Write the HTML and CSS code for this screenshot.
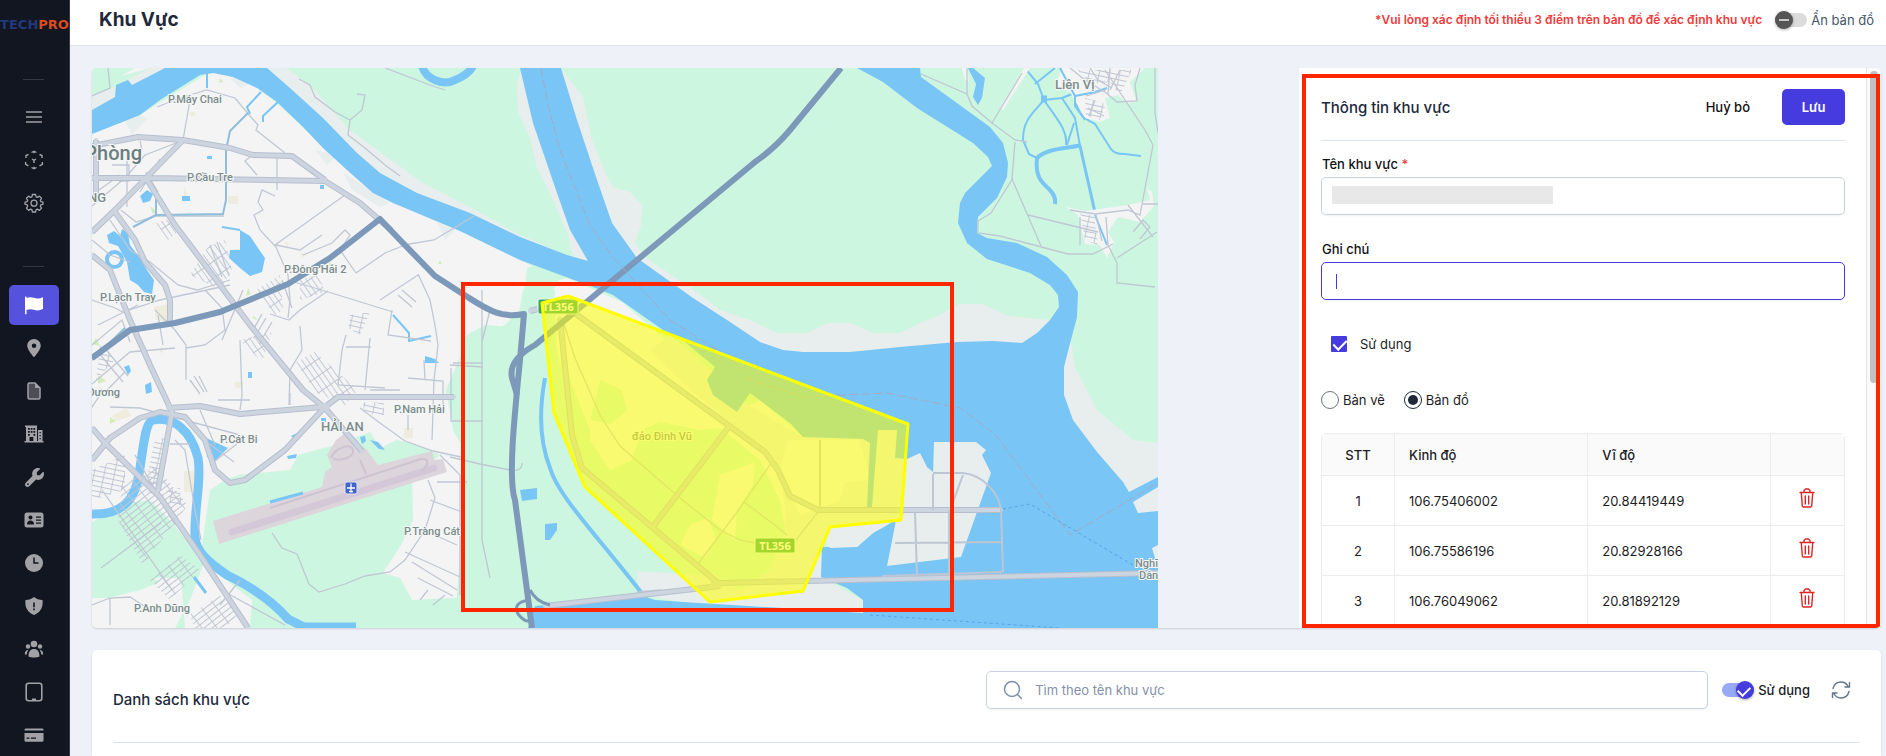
FILE: index.html
```html
<!DOCTYPE html>
<html lang="vi">
<head>
<meta charset="utf-8">
<meta name="viewport" content="width=device-width, initial-scale=1">
<title>Khu Vực</title>
<link rel="stylesheet" href="styles.css">
</head>
<body>
<div class="app">
  <nav class="sidebar" aria-label="Menu chính">
    <a class="logo" href="#"><span class="logo-tech">TECH</span><span class="logo-pro">PRO</span></a>
    <hr class="side-rule">
    <ul class="side-list">
      <li><a class="side-item" href="#" aria-label="Menu"><svg width="18" height="18" viewBox="0 0 18 18" fill="none" stroke="currentColor" stroke-width="1.400"><path d="M1 4h16M1 9h16M1 14h16"/></svg></a></li>
      <li><a class="side-item" href="#" aria-label="Quét"><svg width="20" height="20" viewBox="0 0 20 20" fill="none" stroke="currentColor" stroke-width="1.400"><path d="M7.500 2.500 10 1.200l2.500 1.300M10 1.200v2M7.500 17.500l2.500 1.300 2.500-1.300M10 18.800v-2M2 8V5.500l2.500-1M1.600 12v2.300l2.900 1.600M18 8V5.500l-2.500-1M18.400 12v2.300l-2.900 1.600M8 9l2 1.300L12 9M10 10.300V13"/></svg></a></li>
      <li><a class="side-item" href="#" aria-label="Cài đặt"><svg width="20" height="20" viewBox="0 0 20 20" fill="none" stroke="currentColor" stroke-width="1.300" stroke-linejoin="round"><path d="M8.400 1.500h3.200l.5 2.300 1.300.6 2-1.300 2.100 2.200-1.200 2 .5 1.300 2.200.5v2.100l-2.200.6-.5 1.400 1.200 2-2.100 2.200-2-1.300-1.300.6-.5 2.300H8.400l-.5-2.300-1.300-.6-2 1.300-2.100-2.200 1.200-2-.5-1.400-2.200-.6V9.100l2.200-.5.500-1.300-1.200-2 2.100-2.200 2 1.300 1.300-.6z"/><circle cx="10" cy="10.200" r="3"/></svg></a></li>
    </ul>
    <hr class="side-rule side-rule-second">
    <ul class="side-list">
      <li><a class="side-item active" href="#" aria-label="Khu vực" aria-current="page"><svg width="20" height="20" viewBox="0 0 20 20" fill="currentColor"><path d="M1 2c0-.6 1.500-.6 1.500 0v.9C5 1.800 7.500 2 10 2.800c3 1 5.500.9 9-.6v11.900c-3.500 1.700-6 1.700-9 .7-2.500-.8-5-.9-7.500.2v4.200H1z"/></svg></a></li>
      <li><a class="side-item" href="#" aria-label="Vị trí"><svg width="18" height="18" viewBox="-64 0 512 512" fill="currentColor"><path d="M215.700 499.200C267 435 384 279.400 384 192C384 86 298 0 192 0S0 86 0 192c0 87.400 117 243 168.300 307.200c12.300 15.300 35.100 15.300 47.400 0zM192 128a64 64 0 1 1 0 128 64 64 0 1 1 0-128z"/></svg></a></li>
      <li><a class="side-item" href="#" aria-label="Tài liệu"><svg width="18" height="18" viewBox="0 0 18 18"><path d="M3.500 1H10l5 5v9.500a1.500 1.500 0 0 1-1.500 1.500h-9A1.500 1.500 0 0 1 3 15.500v-13A1.500 1.500 0 0 1 4.500 1z" fill="#4b4e57" stroke="currentColor" stroke-width="1.500"/><path d="M10 1v5h5z" fill="currentColor"/></svg></a></li>
      <li><a class="side-item" href="#" aria-label="Tòa nhà"><svg width="20" height="20" viewBox="0 0 20 20" fill="currentColor" fill-rule="evenodd"><path d="M1 1.500h12V17h1V6h4.500v11h1v1.500H.5V17H2V3H1zM4 4v1.800h1.800V4zm2.700 0v1.800h1.800V4zm2.700 0v1.800h1.800V4zM4 7v1.800h1.800V7zm2.700 0v1.800h1.800V7zm2.700 0v1.800h1.800V7zM4 10v1.800h1.800V10zm5.400 0v1.800h1.800V10zM5.500 13v4h3.800v-4zM15.500 8v1.300h1.300V8zm0 3v1.300h1.300V11zm0 3v1.300h1.300V14z"/></svg></a></li>
      <li><a class="side-item" href="#" aria-label="Bảo trì"><svg width="19" height="19" viewBox="0 0 512 512" fill="currentColor"><path d="M352 320c88.400 0 160-71.600 160-160c0-15.300-2.200-30.100-6.200-44.200c-3.100-10.800-16.400-13.200-24.300-5.300l-76.800 76.800c-3 3-7.100 4.700-11.300 4.700H336c-8.800 0-16-7.200-16-16V118.600c0-4.200 1.700-8.300 4.700-11.300l76.800-76.800c7.900-7.900 5.400-21.200-5.300-24.300C382.100 2.200 367.300 0 352 0C263.600 0 192 71.600 192 160c0 19.100 3.400 37.500 9.500 54.500L19.900 396.100C7.200 408.800 0 426.100 0 444.100C0 481.600 30.400 512 67.900 512c18 0 35.300-7.200 48-19.900L297.500 310.500c17 6.200 35.400 9.500 54.500 9.500zM80 408a24 24 0 1 1 0 48 24 24 0 1 1 0-48z"/></svg></a></li>
      <li><a class="side-item" href="#" aria-label="Thẻ nhân viên"><svg width="20" height="20" viewBox="0 0 20 20"><rect x="0.500" y="2.500" width="19" height="15" rx="2.500" fill="currentColor"/><g fill="#111621"><circle cx="6.500" cy="7.500" r="2"/><path d="M3 14.500c0-3 1.500-4 3.500-4s3.500 1 3.500 4zM12 6.500h5v1.300h-5zM12 9.500h5v1.300h-5zM12 12.500h5v1.300h-5z"/></g></svg></a></li>
      <li><a class="side-item" href="#" aria-label="Thời gian"><svg width="18" height="18" viewBox="0 0 18 18"><circle cx="9" cy="9" r="9" fill="currentColor"/><path d="M9 3.500V9h4.500" fill="none" stroke="#111621" stroke-width="1.500"/></svg></a></li>
      <li><a class="side-item" href="#" aria-label="Cảnh báo"><svg width="18" height="18" viewBox="0 0 18 18"><path d="M9 0c2.500 2 5 2.700 8.500 3 .8 6.500-1.500 12-8.500 15C2 15 -.3 9.500.5 3 4 2.700 6.500 2 9 0z" fill="currentColor"/><path d="M9 5.500v4.700M9 11.500v1.700" stroke="#111621" stroke-width="1.600"/></svg></a></li>
      <li><a class="side-item" href="#" aria-label="Nhóm người dùng"><svg width="20" height="20" viewBox="0 0 20 20" fill="currentColor"><circle cx="10" cy="5" r="3.300"/><circle cx="4" cy="7.500" r="2.200"/><circle cx="16" cy="7.500" r="2.200"/><path d="M4.500 17.500c0-5 2-7.500 5.500-7.500s5.500 2.500 5.500 7.500c-3 1.300-8 1.300-11 0zM.800 15.500c0-2.700 1-4.500 3.600-4.700-1 1.500-1.500 3-1.600 4.700zM19.200 15.500c0-2.700-1-4.500-3.600-4.700 1 1.500 1.500 3 1.600 4.700z"/></svg></a></li>
      <li><a class="side-item" href="#" aria-label="Thiết bị"><svg width="18" height="20" viewBox="0 0 18 20"><rect x="1.200" y="1.200" width="15.600" height="17.600" rx="2.500" fill="none" stroke="currentColor" stroke-width="1.600"/><path d="M7 16.500h4v2H7z" fill="currentColor"/></svg></a></li>
      <li><a class="side-item" href="#" aria-label="Thanh toán"><svg width="20" height="20" viewBox="0 0 20 20"><path d="M1.500 3.500h17a1.200 1.200 0 0 1 1 1.200v.8H.5v-.8a1.200 1.200 0 0 1 1-1.200zM.5 8h19v7.500a1.200 1.200 0 0 1-1.200 1.200H1.700A1.200 1.200 0 0 1 .5 15.500z" fill="currentColor"/><path d="M2.500 13.200h3M7 13.200h5" stroke="#111621" stroke-width="1.200"/></svg></a></li>
    </ul>
  </nav>

  <div class="page">
    <header class="topbar">
      <h1>Khu Vực</h1>
      <p class="hint">*Vui lòng xác định tối thiểu 3 điểm trên bản đồ để xác định khu vực</p>
      <label class="switch-label muted"><input type="checkbox" role="switch" class="switch switch-off">Ẩn bản đồ</label>
    </header>

    <main class="content">
      <section class="map-card">
        <svg class="map" viewBox="92 68 1066 560" preserveAspectRatio="xMinYMin slice" role="img" aria-label="Bản đồ khu vực đảo Đình Vũ">
          <defs>
            <pattern id="blocks" width="12" height="5" patternUnits="userSpaceOnUse" patternTransform="rotate(-38)"><path d="M0 0H12M0 0V5" fill="none" stroke="#bfc6d3" stroke-width="1.900"/></pattern>
            <pattern id="blocks-steep" width="5" height="14" patternUnits="userSpaceOnUse" patternTransform="rotate(-35)"><path d="M0 0V14M0 0H5" fill="none" stroke="#bfc6d3" stroke-width="1.800"/></pattern>
            <pattern id="blocks-flat" width="10" height="5" patternUnits="userSpaceOnUse" patternTransform="rotate(12)"><path d="M0 0H10M0 0V5" fill="none" stroke="#bfc6d3" stroke-width="1.800"/></pattern>
          </defs>
          <rect class="green" x="92" y="68" width="1066" height="560"/>

          <!-- shore strips -->
          <path class="sand" d="M92 95 108 90 150 68H165L92 112ZM267 68H286L310 85 350 130 423 183 470 207 520 235 590 265 470 225 350 170ZM521 70 517 83 518 112 530 138 537 168 550 193 568 235 573 257 590 262 580 190 540 110ZM561 68 583 97 592 140 607 177 613 187 630 192 642 205 641 225 635 243 647 259 690 287 720 310 750 320 778 333H807L827 323H851L873 333H900L920 323 940 315 958 304H983L1008 316 1050 320 1030 360H760L690 320 600 240ZM1071 340 1075 367 1097 410 1133 440 1158 443V628H1050L1060 380Z"/>

          <!-- built-up land -->
          <path class="land" d="M92 132 140 115 213 70 260 88 350 170 400 205 480 240 560 280 567 278 622 302 660 335 700 360 707 380 737 412 760 400 803 437 870 440 868 505 750 530 740 580 690 560 660 520 600 470 560 410 550 340 530 300 525 285 519 312 510 327 485 325 467 335 462 350 461 440 467 480 480 495 482 560 500 580 490 628H92Z"/>
          <path class="sand" d="M230 78 240 88 254 82zM315 150 327 165 338 155zM343 172 352 190 380 207 390 203zM437 222 445 240 455 230zM120 110 148 118 132 135zM670 335 700 360 740 400 803 437 880 425 900 430 908 458 920 453 934 472V442H976L986 450 982 455 991 473 961 557 887 566 896 520 840 525 822 547 821 577 863 600V613L700 605 640 595 636 571 700 575 760 565 786 520 780 470 740 430 690 390 650 350Z"/>
          <path class="sand" d="M1129 492 1158 477V487L1133 502 1138 513 1158 511V545L1152 548 1158 562V628H1130Z"/>

          <!-- fields and parks -->
          <path class="green" d="M92 68H147L92 95ZM527 268 543 262 560 278 552 292 524 306ZM464 338 505 325 520 310 523 290 555 290 556 345 570 415 590 480 700 572 638 571 560 610H500L468 590 462 500Z"/>
          <path class="green" d="M210 490 225 480 238 475 290 470 298 455 335 445 370 432 380 448 397 440 420 446 440 455 412 480 413 520 401 545 383 573 400 578 412 600 470 597 468 628H250L252 600 200 560ZM92 522 128 503 150 500 170 520 190 545 205 560 190 600 175 628H185L182 590 180 578 140 578 92 590Z"/>
          <path class="green" d="M92 545 110 560 140 570 160 582 140 590 108 598 92 598ZM463 350 446 390 453 430 461 445 464 480 455 628H510V480H480V350Z"/>
          <path class="green" d="M600 380 622 390 627 410 610 425 590 420ZM560 330 570 380 590 430 610 470 632 460 642 430 660 422 700 430 720 428 760 460 780 500 785 530 770 570 740 590 700 565 600 500 580 470 562 400Z"/>
          <path class="land" d="M590 420 615 425 632 460 610 470 590 440ZM720 475 755 462 753 485 737 510 735 540 712 520ZM690 525 708 518 716 540 705 558 680 545ZM788 440 860 440 870 480 845 482 840 500 800 515 780 470Z"/>
          <path class="green" d="M500 610 560 606 556 628H500Z"/>
          <path class="lime" d="M150 206 157 212 153 214zM96 338 100 346 92 344zM98 375 106 381 98 384zM220 78 223 82 219 83zM248 288 246 296 251 294zM110 417 116 421 110 424zM186 473 190 477 186 477zM330 262 327 266 332 266zM254 316 258 320 252 318zM440 260 442 264 438 264z"/>
          <path class="field" d="M154 307 168 304 167 322 156 320zM184 187 188 196 184 200zM228 196H238V204H228zM184 471H197L194 492H184zM235 382h8v6h-8zM404 428h9v10h-9zM112 416 126 408 132 416 116 421zM190 112h5v4h-5zM158 349l5-2v7zM284 241l5 2-2 5zM300 252l6 3-4 3z"/>

          <!-- airport -->
          <path class="airport" d="M213 521 322 487 325 472 332 467 327 455 336 440 345 433 367 450 378 465 432 451 434 460 443 459 447 472 219 544Z"/>
          <path class="runway" d="M232 532 434 468"/>
          <path class="taxiway" d="M270 508 421 459q8-1 6 6l-5 6M331 458c4-10 20-16 22-8s-16 12-20 8M360 460l6 14"/>

          <!-- rivers and sea -->
          <path class="water" d="M92 110 115 97 116 85 128 80 132 85 165 68H267L290 88 323 118 357 153 380 173 417 193 470 213 520 237 567 255 588 261 570 230 557 193 533 123 520 68H561L577 120 597 180 612 223 637 258 693 298 727 320 760 342 783 350 803 352H850L900 347 957 342 993 341 1022 343 1037 333 1050 320 1059 307 1058 295 1050 285 1030 273 987 259 967 243 958 223 960 203 965 193 992 166 988 157 973 143 917 108 883 82 857 68H920L921 77 990 127 1003 143 1008 163 1007 177 997 198 978 217 977 233 987 238 1017 243 1047 257 1067 275 1078 292 1077 317 1067 355 1064 367V395L1073 420 1097 452 1123 482 1129 492 1158 477V487L1133 502 1138 513 1158 511V545L1152 548 1155 558 1158 560V628H528L535 606 640 595 655 600 683 602 863 613V600L847 588 821 577 822 547 857 547 873 533 896 520 887 566 961 557 991 473 982 455 986 450 976 442H934L933 472 927 467 920 453 907 459 895 458 897 430H878L872 507H867L870 443 863 439 803 437 790 423 750 393 737 412 713 395 707 380 715 367 680 338 663 330 613 295 593 287 547 270 520 260 460 231 393 203 373 193 347 170 323 148 303 127 277 102 257 88 233 77 213 73 200 75 160 100 140 115 120 123 92 134Z"/>
          <path class="sand" d="M655 592 690 590 712 598 715 603 683 600zM870 517 896 515 892 522 873 533 857 547 830 548 824 540 835 525z"/>
          <path class="land" d="M121 76 150 68H135z"/>
          <g class="stream" fill="none">
            <path stroke-width="9" d="M92 514c28 1 43-12 47-40 5-30 6-52 14-54 20-4 38 10 45 38 4 22-4 50-3 78 0 16 16 28 32 39 25 12 44 25 61 44l16 8h52"/>
            <path stroke-width="4" d="M545 378c-6 32-6 62 5 90 8 28 46 66 97 132"/>
            <path stroke-width="8" d="M422 66c4 14 22 20 33 14 10-4 16-10 18-14"/>
            <path stroke-width="2" d="M207 73v15M261 92l-14 15 3 7M278 102l-15 14v6"/>
            <path stroke-width="2" d="M1025 68 1038 84 1044 100 1062 98 1072 94 1090 90 1105 91M1055 68 1035 84M1044 100c-12 14-21 20-21 40l6 14 8 4M1062 98 1075 118 1080 146M1044 100c12 18 24 30 22 45M1074 123l-7 22M1075 96c2 20 12 24 20 28l14 22c4 8 10 8 16 8l16 2"/>
            <path stroke-width="3" d="M1080 146 1099 230"/>
            <path stroke-width="4" d="M1037 158c10-10 30-9 44-13M1037 158c-2 18 4 24 12 31 6 6 7 10 6 15"/>
            <path stroke-width="7" d="M1041 99h6"/>
            <path stroke-width="3" d="M1096 216l11 28M270 502l33-9M194 577l12 16"/>
            <path stroke-width="2" d="M222 227l18 3M393 315l16 18v8l22-5"/>
          </g>
          <path class="water" d="M140 196 147 190 153 194 150 201 143 203zM122 229 128 233 130 245 140 258 147 270 154 280 152 294 144 292 138 285 130 280 127 262 118 246 109 243 107 235 114 231 120 236zM240 230 250 236 258 248 265 258 262 272 250 276 240 268 229 258 230 250 240 250zM182 196h8v5h-8zM207 156h5v3h-5zM320 185h4v4h-4zM124 367l5-2 2 6-3 4zM145 385l6-3 1 10-6 2zM248 372h4v6h-4zM206 438l22 10-14 14-7-5zM425 356l10 3 4 4h-14zM287 456l10-2-1 4-8 1zM360 437l5-1 1 5-4 3zM370 440l8 2 7 8-6-1zM321 418h5v4h-5zM291 436l8-4-4 8zM520 490l17-2v11l-15 2zM545 524l12-1v7l-7 10h-5zM968 68l5 0 12 10-3 20-4 7-5-8 3-13z"/>
          <circle cx="114.500" cy="259.500" r="7.500" fill="#f4f4f4" stroke="#78c5f6" stroke-width="4"/>
          <path class="land" d="M1062 68H1145L1130 82 1136 100 1128 104 1118 95 1105 98 1110 118 1100 122 1085 118 1070 92 1056 85zM1066 207 1085 211 1128 205 1150 200 1147 188 1152 192 1154 206 1140 222 1118 217 1108 232 1114 242 1107 258 1100 245 1085 244 1078 215zM962 68h5l2 14-4-2zM1024 68h6l-27 42-3-2z"/>
          <path class="thin-water" d="M1060 68l15 28 20-4 12-4M1095 215l12 30M1075 96v10l10 14"/>

          <!-- street blocks -->
          <path fill="url(#blocks)" d="M122 486 155 465 188 505 143 565 118 520zM150 580 180 555 200 570 170 600zM190 615 220 595 238 615 225 628H195z"/>
          <path fill="url(#blocks-steep)" d="M208 247 225 240 232 270 220 290 190 275zM240 340 272 332 262 362zM296 362 315 352 358 390 345 405 315 392zM256 290 280 275 283 310 275 315zM300 280 318 275 325 292 300 300zM156 223 172 218 182 228 168 240z"/>
          <path fill="url(#blocks-flat)" d="M155 440 165 438 155 495 144 490zM92 470 125 455 125 490 92 500zM350 315 370 312 360 335 348 328zM1080 212 1094 216 1098 245 1085 240zM100 345 115 360 96 380zM168 490 180 488 182 505 170 505zM1085 98 1106 104 1100 120 1086 116zM1078 70 1132 70 1120 95 1110 82 1090 84zM363 402 384 403 384 415 364 414z"/>

          <!-- minor streets -->
          <g class="street">
            <path d="M157 107 180 98 207 90 235 98 250 116 258 125 256 130 285 153M190 100 183 140M140 141 142 150M92 206 125 178 145 155 184 140 M160 159l-20 33M277 155v35M250 157l-5 4 12 14M92 195 120 175M127 155v52M112 165h17v16h-10M146 172l12 20"/>
            <path d="M121 210l15 12 20-6H224M110 220 130 250 150 262 178 285 197 290 230 280M345 195 275 245M275 196 262 190 258 202 263 210 254 215 260 230 276 247 288 275 290 300 288 318M322 235 300 250 276 245M303 255 332 243 345 230 350 235 340 250 356 273M356 273 385 253 405 245 M404 245l30-5 40-24M294 282 325 291 393 312M328 291 300 310 289 320 270 314M418 274 430 300 435 325 438 345 434 380 432 440M392 310 388 335 431 341 M418 275 380 300"/>
            <path d="M92 300 115 308 123 312 160 300 230 285M98 325 138 305M92 240 110 255 130 262M155 310 175 330 186 345 186 380M205 290 222 308 225 330 205 345 186 348M243 290 222 340M240 340 242 395 240 410M346 335 342 350 338 385 385 388 M370 338 365 390M300 326 302 350 290 370 289 405M346 347h25"/>
            <path d="M92 384 130 352 175 348M110 407 140 408 240 435M90 410 100 395M125 372l-20 20M218 400H250M360 408l20 15 25 18 28 10 28 6M408 378l35 3v28M424 360 425 380 M370 390h30M408 415v15M428 480l7 18-10 32-20 30-15 12-25 4-20 8-26 8-10-8-12-30-15-6-10-15M405 552l55 25M412 562l45 28M430 500l32 12M423 530l34 15M437 482h30M440 455l20 20v120M418 578l35 18M428 590l-8 10M445 595l-12 10M135 455l40 70M102 490l70 100M101 568l60-45M110 625V598L130 597 150 610M92 605l18-7M225 592 285 625M240 580l-20 25M290 393V405M175 440l10 10 10 60 6 30M170 444l20 0M200 410 215 445M210 465l28-22M204 440l30 22"/>
            <path d="M482 290v50 200l8 38M453 363h30M451 368v53h32M450 365l33 2M450 457l30 7 30 6q12 2 12-7M490 310l-8 32"/>
            <path d="M921 74 967 94 972 106 992 123 1015 140 1027 142M967 68V94M992 123l30-50M1015 142l-3 37 16 37 13 30M1013 178l-22 35-13 8v12l22 3 30 8 38 10h25l20-10M1028 215l70 17M1105 70 1145 130 1153 145 1140 215 1128 210 1095 214 1070 210M1155 68v45l3 20M1107 243l10 20v20l38 4M1117 258l40-26M1128 205l25 32M1143 204h15M1133 232l10-12 7 7-10 12M1096 215l6 26M1106 217l2 28M1080 217v28"/>
            <path d="M1070 68l15 12 20 12 12 10 20-1-2-16 5-17M1090 68l8 12 14 8M1088 108l16 8M1086 96l20-6M1095 100l-6 16M1110 68l-2 26M1120 70l-10 20"/>
            <path d="M92 345 122 320 130 342M158 315l5 30M98 352l25 30M103 346l25 30M210 245l12 32M217 242l12 34M262 314l-10 18M266 318l-12 20M272 322l-13 22M282 280l10 28M398 295l14 12M402 290l14 12M190 380l10 14M194 376l10 16M199 376l8 16"/>
            <path d="M299 79 310 85 315 97 335 112 350 120 362 110 365 95 357 94M350 120 348 135 365 148 385 165 400 176M385 68 430 85 445 90M108 68 110 88 92 96"/>
            <path d="M562 318 575 358 600 415 620 446 680 498 720 530 740 540 755 543M772 462 735 515 697 565M744 502 775 525 787 535M796 540 818 512M661 590 637 592"/>
          </g>
          <path class="canal" d="M248 113 230 131 226 150V200L223 214 156 215V196M156 215 133 227M92 360 125 328"/>

          <!-- main streets -->
          <g class="road-edge"><use href="#roads"/></g>
          <g class="road-fill"><g id="roads">
            <path d="M92 146 138 137 183 140 230 148 253 155 292 156 325 180"/>
            <path d="M96 200V140M92 178 150 178 325 181 360 203 391 230M92 232 115 210 183 140M146 178 175 225 250 325 303 390 325 408 362 451M115 212 135 240 145 262 165 285 170 300V322M92 255 110 270 130 320 150 365 172 412 158 490M92 460 110 438 140 418 160 412 185 417 205 440 215 470 230 483 245 480 285 450 325 407 338 397H454M105 443 160 497 200 555 248 628M168 408 200 406 240 414 322 407M92 428 105 443"/>
            <path d="M538 309 530 311M560 318 572 435 582 468 718 583 712 585M576 314 765 452 778 470 790 496 818 510H1001M728 428 652 528M718 583 1158 573M545 606 720 586"/>
          </g></g>
          <g class="road-mid">
            <path d="M820 440v68M933 474v36M933 473h30c20 2 36 20 38 37l2 62M963 475l-10 27M949 510v66M915 512l2 63M895 543l107-1M882 576l120-4"/>
          </g>

          <!-- highways -->
          <g class="highway">
            <path d="M92 358 130 330 175 323 220 312 288 284 330 258 380 219 400 240 435 276 466 296C485 308 500 319 524 314L520 360C514 420 508 480 515 500L532 628"/>
            <path d="M841 68 790 130Q775 148 755 162L535 345Q508 360 512 378L517 395"/>
            <path class="ramp" d="M530 590q6 12 20 15M530 600q-18 2-12 14 8 10 14 6"/>
          </g>
          <circle cx="325" cy="407" r="4" fill="#ccd4e0"/>
          <path class="border-line" d="M541 68 548 105 560 150 590 225 612 256 670 320 730 358 750 380 805 397 887 393 960 408 995 434 1070 535 1158 483"/>
          <path class="ferry" d="M1003 509 1030 504 1158 580M870 615 1060 628"/>

          <!-- place names -->
          <g class="place">
            <text x="168" y="103">P.Máy Chai</text>
            <text x="187" y="181">P.Cầu Tre</text>
            <text x="284" y="273">P.Đông Hải 2</text>
            <text x="100" y="301">P.Lạch Tray</text>
            <text x="120" y="396" text-anchor="end">P.Dương</text>
            <text x="220" y="443">P.Cát Bi</text>
            <text x="394" y="413">P.Nam Hải</text>
            <text x="404" y="535">P.Tràng Cát</text>
            <text x="134" y="612">P.Anh Dũng</text>
            <text x="1135" y="567">Nghĩa</text>
            <text x="1139" y="579">Dân</text>
            <text x="632" y="440">đảo Đình Vũ</text>
          </g>
          <g class="place place-mid">
            <text x="106" y="202" text-anchor="end">NG</text>
            <text x="321" y="431">HẢI AN</text>
            <text x="1055" y="89">Liên Vị</text>
          </g>
          <text class="place place-city" x="142" y="160" text-anchor="end">Phòng</text>
          <rect x="345" y="482" width="12" height="12" rx="2" fill="#4263c9" stroke="#dfe5f8"/>
          <path d="M351 483.500v9M347 488h8M349 491.500h4" stroke="#fff" stroke-width="1.300"/>

          <g class="shield">
            <rect x="538" y="299" width="40" height="15" rx="2"/><text x="558" y="311">TL356</text>
            <rect x="755" y="538" width="40" height="15" rx="2"/><text x="775" y="550">TL356</text>
          </g>

          <path class="zone" d="M542 303 568 296 908 424 901 520 830 527 803 591 710 602 585 487 554 413Z"/>
          <rect class="marker" x="463" y="284" width="489" height="326"/>
        </svg>

        <aside class="panel">
          <form class="form">
            <div class="form-head">
              <h2>Thông tin khu vực</h2>
              <button type="button" class="btn btn-plain">Huỷ bỏ</button>
              <button type="submit" class="btn btn-primary">Lưu</button>
            </div>
            <label class="field-label" for="zone-name">Tên khu vực <span class="required">*</span></label>
            <div class="field-box">
              <input id="zone-name" class="input" type="text">
              <span class="redacted"></span>
            </div>
            <label class="field-label" for="zone-note">Ghi chú</label>
            <div class="field-box">
              <input id="zone-note" class="input input-focus" type="text">
              <span class="caret"></span>
            </div>
            <label class="check-label"><input type="checkbox" class="check" checked>Sử dụng</label>
            <div class="radios">
              <label class="radio-label"><input type="radio" name="source" class="radio">Bản vẽ</label>
              <label class="radio-label"><input type="radio" name="source" class="radio" checked>Bản đồ</label>
            </div>
            <table class="points">
              <thead>
                <tr><th class="col-index">STT</th><th class="col-lng">Kinh độ</th><th class="col-lat">Vĩ độ</th><th class="col-action"></th></tr>
              </thead>
              <tbody>
                <tr><td>1</td><td>106.75406002</td><td>20.84419449</td><td><button type="button" class="trash" aria-label="Xoá điểm 1"><svg width="16" height="20" viewBox="0 0 16 20"><use href="#trash"/></svg></button></td></tr>
                <tr><td>2</td><td>106.75586196</td><td>20.82928166</td><td><button type="button" class="trash" aria-label="Xoá điểm 2"><svg width="16" height="20" viewBox="0 0 16 20"><use href="#trash"/></svg></button></td></tr>
                <tr><td>3</td><td>106.76049062</td><td>20.81892129</td><td><button type="button" class="trash" aria-label="Xoá điểm 3"><svg width="16" height="20" viewBox="0 0 16 20"><use href="#trash"/></svg></button></td></tr>
              </tbody>
            </table>
          </form>
          <div class="scroll-track"><div class="scroll-thumb"></div></div>
          <div class="panel-marker"></div>
        </aside>
      </section>

      <section class="list-card">
        <div class="list-head">
          <h2>Danh sách khu vực</h2>
          <div class="search">
            <svg width="20" height="20" viewBox="0 0 20 20" fill="none" stroke="#7f8fa8" stroke-width="1.500" stroke-linecap="round"><circle cx="9" cy="9" r="7.500"/><path d="m14.500 14.500 4 4"/></svg>
            <input type="search" aria-label="Tìm theo tên khu vực" placeholder="Tìm theo tên khu vực">
          </div>
          <label class="switch-label"><input type="checkbox" role="switch" class="switch" checked>Sử dụng</label>
          <button type="button" class="refresh" aria-label="Tải lại"><svg width="20" height="20" viewBox="0 0 20 20" fill="none" stroke="#64748b" stroke-width="1.400" stroke-linecap="round" stroke-linejoin="round"><path d="M2 8.500C3 4.500 6 2 10 2c3.300 0 5.800 1.700 7.500 5M18.500 2.500V7H14M18 11.500c-1 4-4 6.500-8 6.500-3.300 0-5.800-1.700-7.500-5M1.500 17.500V13H6"/></svg></button>
        </div>
      </section>
    </main>
  </div>
</div>
<svg class="symbols" aria-hidden="true"><g id="trash" fill="none" stroke="#dc2626" stroke-width="1.400" stroke-linejoin="round" stroke-linecap="round"><path d="M1 4.500h14M5 4V2.500L6.500 1h3L11 2.500V4M2.300 5l1 13 1 1h7.400l1-1 1-13M6.300 8v8M9.700 8v8"/></g></svg>
</body>
</html>
```
FILE: styles.css
```css
* { box-sizing: border-box; }

body {
  margin: 0;
  font-family: Inter, "Liberation Sans", sans-serif;
  font-size: 13px;
  line-height: 20px;
  color: #1e293b;
  background: #eef1f7;
}

h1, h2, p, ul { margin: 0; padding: 0; }
h2 { font-size: 15px; font-weight: 500; line-height: 24px; }
button { font: inherit; border: 0; background: none; padding: 0; cursor: pointer; }
input { font: inherit; margin: 0; }

.symbols { position: absolute; width: 0; height: 0; }

.app { display: flex; height: 100vh; overflow: hidden; }

/* Sidebar */
.sidebar {
  flex: 0 0 70px;
  overflow: hidden;
  background: #111621;
  border-right: 1px solid #343a48;
}
.logo {
  display: flex;
  justify-content: center;
  padding-top: 15px;
  height: 79px;
  font: bold 13px/20px "DejaVu Sans", sans-serif;
  text-decoration: none;
}
.logo-tech { color: #22397c; }
.logo-pro { color: #d94c21; }
.side-rule {
  width: 21px;
  height: 1px;
  margin: 0 auto 17px 23px;
  border: 0;
  background: #333945;
}
.side-rule-second { margin-top: 43px; margin-bottom: 18px; }
.side-list { display: grid; gap: 3px; list-style: none; padding-left: 9px; }
.side-item {
  display: flex;
  align-items: center;
  justify-content: center;
  width: 50px;
  height: 40px;
  border-radius: 5px;
  color: #a1a1a6;
}
.side-item.active { background: #5552dd; color: #fff; }

/* Header */
.page { flex: 1; min-width: 0; display: flex; flex-direction: column; }
.topbar {
  display: flex;
  align-items: center;
  height: 46px;
  padding: 0 12px 6px 29px;
  background: #fff;
  border-bottom: 1px solid #dbe2ec;
}
h1 { flex: 1; font-size: 19px; line-height: 28px; font-weight: 700; }
.hint { margin-right: 13px; color: #ef3b3b; font-size: 12px; font-weight: 600; }

.switch-label { display: flex; align-items: center; gap: 4px; color: #1d1d1f; font-weight: 500; }
.muted { color: #475569; font-weight: 400; }
.switch {
  appearance: none;
  position: relative;
  width: 32px;
  height: 14px;
  border-radius: 7px;
  background: #98a8fb;
}
.switch::before {
  content: "";
  position: absolute;
  top: -2px;
  right: 0;
  width: 18px;
  height: 18px;
  border-radius: 50%;
  background: #453bdf;
  box-shadow: 0 1px 3px #0005;
}
.switch::after {
  content: "";
  position: absolute;
  top: 1px;
  right: 6px;
  width: 6px;
  height: 10px;
  border: solid #fff;
  border-width: 0 2px 2px 0;
  transform: rotate(45deg);
}
.switch-off { background: #dcdcdc; }
.switch-off::before { left: 0; background: #555; }
.switch-off::after {
  top: 6px;
  left: 4px;
  width: 10px;
  height: 2px;
  border: 0;
  background: #c8c8c8;
  transform: none;
}

/* Content */
.content {
  flex: 1;
  display: flex;
  flex-direction: column;
  gap: 22px;
  padding: 22px 5px 0 22px;
}
.map-card {
  display: flex;
  justify-content: space-between;
  height: 560px;
  overflow: hidden;
  border-radius: 5px;
  box-shadow: 0 1px 2px #0f172a26;
}

/* Map */
.map { width: 60%; max-width: 1066px; height: 100%; }
.green { fill: #ccf6df; }
.land { fill: #f4f4f4; }
.sand { fill: #e7eeed; }
.lime { fill: #d3edb8; }
.field { fill: #eeeddd; }
.water { fill: #78c5f6; }
.stream { stroke: #78c5f6; stroke-linejoin: round; }
.thin-water { fill: none; stroke: #78c5f6; stroke-width: 2; }
.canal { fill: none; stroke: #8fbddc; stroke-width: 2; }
.airport { fill: #ddd5dc; }
.runway { fill: none; stroke: #d4c7d8; stroke-width: 7; stroke-linecap: round; }
.taxiway { fill: none; stroke: #cdc4d2; stroke-width: 2; }
.street { fill: none; stroke: #c0c7d4; stroke-width: 1.3; }
.road-edge { fill: none; stroke: #b7bfce; stroke-width: 6; stroke-linejoin: round; }
.road-fill { fill: none; stroke: #ccd4e0; stroke-width: 4; stroke-linejoin: round; stroke-linecap: round; }
.road-mid { fill: none; stroke: #bdc6d4; stroke-width: 2; }
.highway { fill: none; stroke: #7d99ba; stroke-width: 6; stroke-linejoin: round; }
.ramp { stroke-width: 3; }
.border-line { fill: none; stroke: #a5aac2; stroke-width: 1; stroke-dasharray: 9 3; }
.ferry { fill: none; stroke: #55a4e2; stroke-width: 1; stroke-dasharray: 3 3; }
.place {
  font: 500 11px Roboto, sans-serif;
  fill: #7c8b8b;
  stroke: #f4f7f6;
  stroke-width: 2px;
  paint-order: stroke;
}
.place-mid { font-size: 13px; }
.place-city { font-size: 20px; fill: #6c7d7d; }
.shield rect { fill: #36a566; stroke: #e8f5ec; }
.shield text { font: bold 11px "Noto Sans", sans-serif; fill: #fff; text-anchor: middle; }
.zone { fill: #ffff00; fill-opacity: .54; stroke: #ffff00; stroke-width: 3; stroke-linejoin: round; }
.marker { fill: none; stroke: #ff2600; stroke-width: 4; }

/* Form panel */
.panel {
  position: relative;
  display: flex;
  width: 33%;
  max-width: 582px;
  background: #fff;
}
.form { flex: 1; min-width: 0; padding: 21px 21px 0 22px; }
.form-head {
  display: flex;
  align-items: flex-start;
  height: 52px;
  margin-bottom: 13px;
  border-bottom: 1px solid #dbe2ec;
}
.form-head h2 { flex: 1; padding-top: 7px; }
.btn { height: 36px; border-radius: 5px; font-weight: 600; }
.btn-plain { padding: 0 32px; color: #111; font-weight: 500; }
.btn-primary { width: 63px; background: #453bdf; color: #fff; }
.field-label { display: block; padding-left: 1px; margin-bottom: 3px; color: #111; font-weight: 500; }
.required { color: #ef3b3b; }
.field-box { position: relative; height: 38px; margin-bottom: 24px; }
.input {
  width: 100%;
  height: 38px;
  padding: 0 14px;
  border: 1px solid #c6d0de;
  border-radius: 5px;
  outline: 0;
  box-shadow: 0 1px 2px #0f172a0d;
}
.input-focus { border-color: #453bdf; }
.redacted { position: absolute; left: 11px; top: 9px; width: 221px; height: 18px; background: #e8e8e8; }
.caret { position: absolute; left: 15px; top: 12px; width: 1px; height: 15px; background: #453bdf; }

.check-label { display: flex; align-items: center; gap: 13px; margin: 34px 0 0 10px; color: #1d1d1f; }
.check {
  appearance: none;
  position: relative;
  width: 16px;
  height: 16px;
  border-radius: 1px;
  background: #453bdf;
}
.check::after {
  content: "";
  position: absolute;
  left: 5px;
  top: 1px;
  width: 6px;
  height: 11px;
  border: solid #fff;
  border-width: 0 2px 2px 0;
  transform: rotate(45deg);
}
.radios { display: flex; gap: 19px; margin: 36px 0 23px; }
.radio-label { display: flex; align-items: center; gap: 4px; color: #1d1d1f; }
.radio {
  appearance: none;
  width: 18px;
  height: 18px;
  border: 1px solid #6b7280;
  border-radius: 50%;
}
.radio:checked { border-color: #1e293b; background: #1e293b; background-clip: content-box; padding: 3px; }

.points {
  width: 100%;
  table-layout: fixed;
  border-collapse: separate;
  border-spacing: 0;
  border: 1px solid #ececec;
  border-radius: 5px 5px 0 0;
  color: #1d1d1f;
}
.points th, .points td {
  height: 50px;
  padding: 0 14px;
  text-align: left;
  border-bottom: 1px solid #ececec;
  border-right: 1px solid #ececec;
}
.points th { height: 42px; background: #fafafa; font-weight: 500; }
.points th:first-child, .points td:first-child,
.points th:last-child, .points td:last-child { text-align: center; }
.points th:last-child, .points td:last-child { border-right: 0; }
.col-index, .col-action { width: 14%; }
.col-lng { width: 37%; }
.col-lat { width: 35%; }
.trash { display: inline-flex; padding-bottom: 5px; }

.scroll-track {
  width: 15px;
  padding: 3px 3px 0;
  border-left: 1px solid #e4e4e4;
  background: #fafafa;
}
.scroll-thumb { height: 56%; border-radius: 4px; background: #c1c1c1; }
.panel-marker {
  position: absolute;
  inset: 6px 1px 0 3px;
  border: 4px solid #ff2600;
  pointer-events: none;
}

/* List card */
.list-card {
  flex: 1;
  padding: 0 21px;
  background: #fff;
  border-radius: 5px 5px 0 0;
  box-shadow: 0 1px 2px #0f172a26;
}
.list-head {
  display: flex;
  align-items: center;
  height: 93px;
  padding-bottom: 13px;
  border-bottom: 1px solid #dbe2ec;
}
.list-head h2 { flex: 1; padding-top: 20px; }
.search {
  display: flex;
  align-items: center;
  gap: 12px;
  flex: 0 1 722px;
  height: 38px;
  margin-right: 14px;
  padding: 0 16px;
  border: 1px solid #c6d0de;
  border-radius: 5px;
  box-shadow: 0 1px 2px #0f172a0d;
}
.search input { flex: 1; border: 0; outline: 0; padding: 0; background: none; }
.search input::placeholder { color: #8491a7; }
.refresh { display: flex; margin: 0 9px 0 21px; }
```
